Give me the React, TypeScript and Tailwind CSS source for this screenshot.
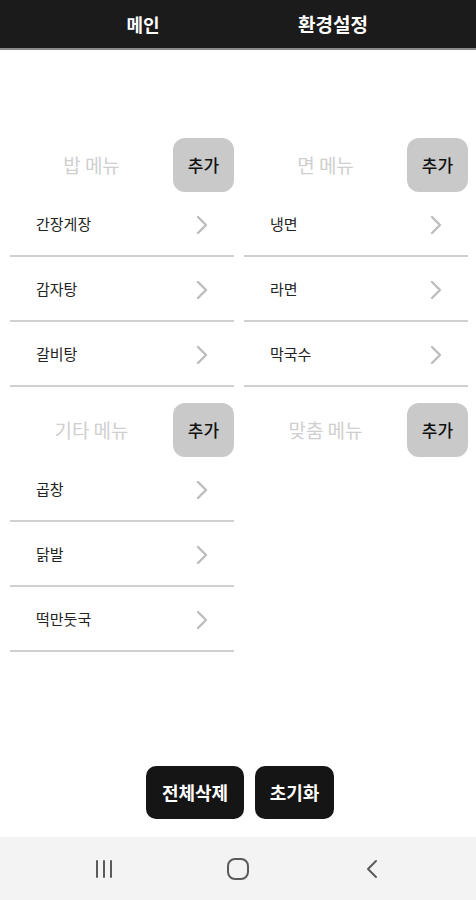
import React from "react";

const font = { fontFamily: '"Noto Sans CJK KR", "Noto Sans", sans-serif' };

function Chevron() {
  return (
    <svg width="12" height="20" viewBox="0 0 12 20" fill="none">
      <path d="M2 2 L10 10 L2 18" stroke="#bdbdbd" strokeWidth="2.4" strokeLinecap="round" strokeLinejoin="round" />
    </svg>
  );
}

function Section({ title, items }: { title: string; items: string[] }) {
  return (
    <div className="flex flex-col">
      <div className="flex h-[54px] items-center">
        <div className="flex-1 pt-[1px] text-center text-[19px] text-[#cfcfcf]">{title}</div>
        <div className="flex h-[54px] w-[61px] items-center justify-center rounded-[12px] bg-[#c9c9c9] text-[17px] font-medium text-[#111]">
          추가
        </div>
      </div>
      {items.map((it) => (
        <div key={it} className="flex h-[65px] items-center justify-between border-b-2 border-[#d0d0d0] pl-[26px] pr-[26px] pt-[2px]">
          <span className="text-[15px] text-[#222]">{it}</span>
          <Chevron />
        </div>
      ))}
    </div>
  );
}

export default function App() {
  return (
    <div className="flex h-[900px] w-[476px] flex-col bg-white" style={font}>
      <div className="grid h-[50px] grid-cols-2 items-center border-b-2 border-[#8a8a8a] bg-[#1b1b1b] px-[48px] text-white">
        <div className="text-center text-[18px] font-bold">메인</div>
        <div className="text-center text-[19px] font-bold">환경설정</div>
      </div>
      <div className="flex-1 pl-[10px] pr-[8px] pt-[88px]">
        <div className="grid grid-cols-2 gap-x-[10px] gap-y-[16px]">
          <Section title="밥 메뉴" items={["간장게장", "감자탕", "갈비탕"]} />
          <Section title="면 메뉴" items={["냉면", "라면", "막국수"]} />
          <Section title="기타 메뉴" items={["곱창", "닭발", "떡만둣국"]} />
          <Section title="맞춤 메뉴" items={[]} />
        </div>
      </div>
      <div className="mb-[18px] flex justify-center gap-[11px] pl-[4px]">
        <div className="flex h-[53px] w-[98px] items-center justify-center rounded-[10px] bg-[#151515] text-[18px] font-bold text-white">
          전체삭제
        </div>
        <div className="flex h-[53px] w-[79px] items-center justify-center rounded-[10px] bg-[#151515] text-[18px] font-bold text-white">
          초기화
        </div>
      </div>
      <div className="grid h-[63px] grid-cols-3 items-center bg-[#f3f3f3] px-[37px]">
        <div className="flex justify-center">
          <svg width="24" height="20" viewBox="0 0 24 20">
            <path d="M5 2 V18 M12 2 V18 M19 2 V18" stroke="#5a5a5a" strokeWidth="2" strokeLinecap="round" />
          </svg>
        </div>
        <div className="flex justify-center">
          <svg width="24" height="24" viewBox="0 0 24 24">
            <rect x="2" y="2" width="20" height="20" rx="7" fill="none" stroke="#5a5a5a" strokeWidth="2" />
          </svg>
        </div>
        <div className="flex justify-center">
          <svg width="16" height="22" viewBox="0 0 16 22">
            <path d="M12 3 L4 11 L12 19" fill="none" stroke="#5a5a5a" strokeWidth="2" strokeLinecap="round" strokeLinejoin="round" />
          </svg>
        </div>
      </div>
    </div>
  );
}
